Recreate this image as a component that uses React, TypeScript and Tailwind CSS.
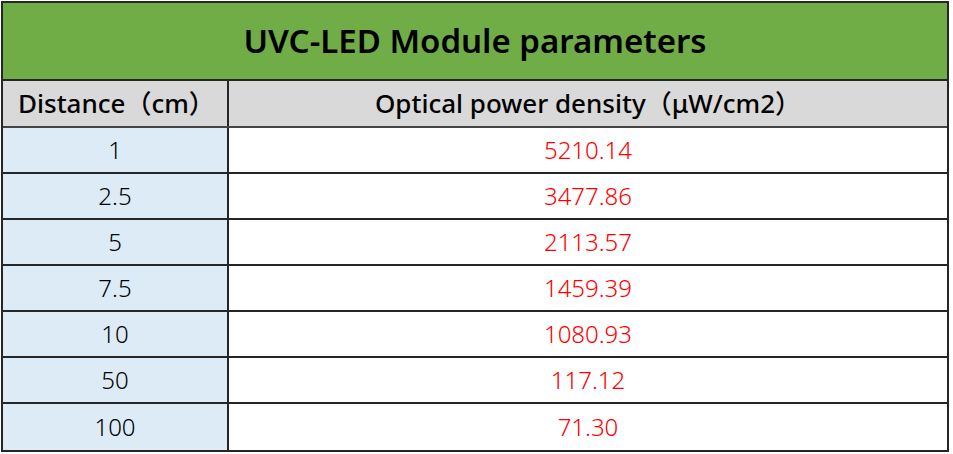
const rows: [string, string][] = [
  ['1', '5210.14'],
  ['2.5', '3477.86'],
  ['5', '2113.57'],
  ['7.5', '1459.39'],
  ['10', '1080.93'],
  ['50', '117.12'],
  ['100', '71.30'],
];

export default function App() {
  return (
    <div className="w-[953px] h-[454px] bg-white pt-[1px] pl-[1px]" style={{ fontFamily: '"Noto Sans", "Noto Sans CJK SC", sans-serif' }}>
      <div className="w-[948px] border-2 border-[#262626] flex flex-col">
        {/* title */}
        <div className="h-[78px] bg-[#70ad47] flex items-center justify-center border-b-2 border-[#262626]">
          <span className="text-[33px] font-semibold text-black">UVC-LED Module parameters</span>
        </div>
        {/* header */}
        <div className="h-[47px] bg-[#d9d9d9] grid grid-cols-[226px_1fr] border-b-2 border-[#444]">
          <div className="flex items-center pl-[15px] border-r-2 border-[#262626] text-[26px] font-medium text-black">
            Distance（cm）
          </div>
          <div className="flex items-center justify-center text-[26px] font-medium text-black">
            Optical power density（μW/cm2）
          </div>
        </div>
        {rows.map(([d, p], i) => (
          <div
            key={d}
            className={`h-[46px] grid grid-cols-[226px_1fr] ${i < rows.length - 1 ? 'border-b-2 border-[#262626]' : ''}`}
          >
            <div className="bg-[#ddebf7] flex items-center justify-center border-r-2 border-[#262626] text-[24px] font-light text-black">
              {d}
            </div>
            <div className="flex items-center justify-center text-[24px] font-light text-[#ff0000]">{p}</div>
          </div>
        ))}
      </div>
    </div>
  );
}
